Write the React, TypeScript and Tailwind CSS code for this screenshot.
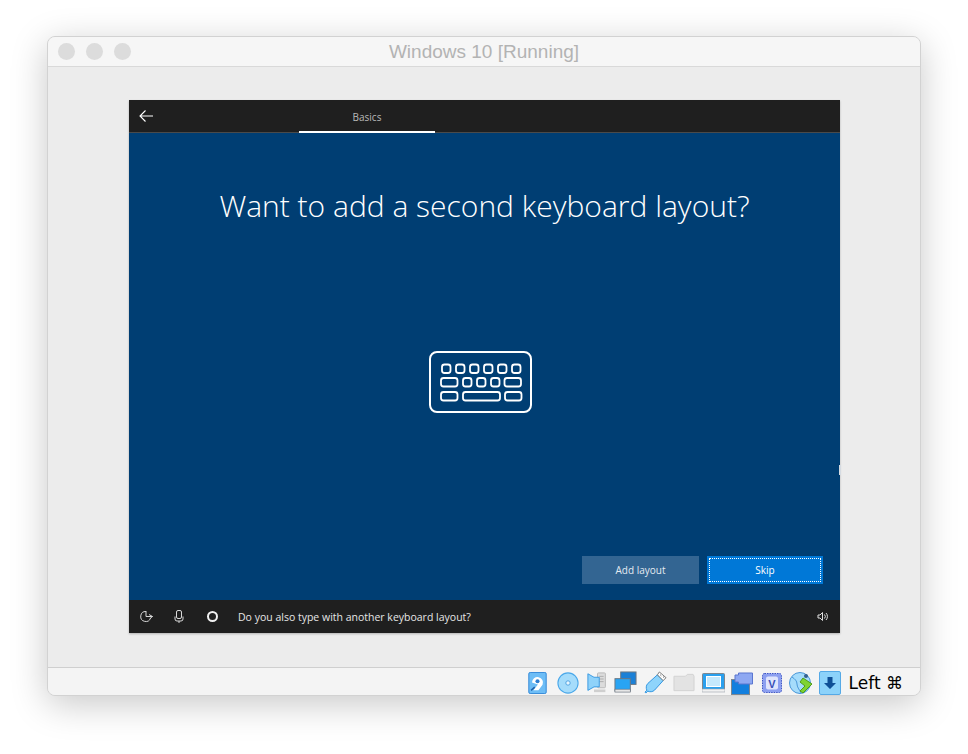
import React from 'react';

const sans = { fontFamily: '"Open Sans", sans-serif' };

function KeyboardIcon() {
  const row1 = [0, 1, 2, 3, 4, 5];
  return (
    <svg width="103" height="62" viewBox="0 0 103 62" fill="none" stroke="#ffffff" strokeWidth="1.8">
      <rect x="1" y="1" width="101" height="60" rx="7" strokeWidth="2" />
      {row1.map((i) => (
        <rect key={i} x={13 + i * 14} y="13.5" width="8.5" height="8.5" rx="2.5" />
      ))}
      <rect x="12" y="27" width="16.5" height="8.5" rx="2.5" />
      <rect x="34" y="27" width="8.5" height="8.5" rx="2.5" />
      <rect x="48" y="27" width="8.5" height="8.5" rx="2.5" />
      <rect x="62" y="27" width="8.5" height="8.5" rx="2.5" />
      <rect x="75.5" y="27" width="16.5" height="8.5" rx="2.5" />
      <rect x="12" y="41" width="16.5" height="8.5" rx="2.5" />
      <rect x="34" y="41" width="37" height="8.5" rx="2.5" />
      <rect x="76" y="41" width="16.5" height="8.5" rx="2.5" />
    </svg>
  );
}

function HardDisk() {
  return (
    <svg width="19" height="22" viewBox="0 0 20 24">
      <rect x="0.5" y="0.5" width="19" height="23" rx="1.5" fill="#6dbdf6" stroke="#2b83d6" />
      <path d="M4 11.5a6 6 0 1 1 11.5 2.4L11 20H5.5l5-6.5" fill="#fff" />
      <circle cx="10" cy="10" r="2.2" fill="#2c7dd0" />
      <path d="M3 20l4-3.5" stroke="#1c5fa8" strokeWidth="1.6" />
    </svg>
  );
}

function Disc() {
  return (
    <svg width="22" height="22" viewBox="0 0 24 24">
      <circle cx="12" cy="12" r="11" fill="#a5dcfb" stroke="#4aa8ea" strokeWidth="1.2" />
      <circle cx="12" cy="12" r="2.4" fill="#e8f6fe" stroke="#4a9fdf" />
    </svg>
  );
}

function Audio() {
  return (
    <svg width="21" height="23" viewBox="0 0 24 24">
      <rect x="12" y="1" width="9" height="17" rx="1" fill="#dcdcdc" stroke="#b5b5b5" />
      <path d="M14 5h5M14 8h5M14 11h5" stroke="#a8a8a8" />
      <rect x="8" y="20" width="13" height="3" fill="#cfcfcf" />
      <path d="M8 6h6v11H8L1 21V2z" fill="#8fd2fa" stroke="#2f93e0" />
    </svg>
  );
}

function Network() {
  return (
    <svg width="23" height="23" viewBox="0 0 24 24">
      <rect x="7" y="1" width="16" height="13" fill="#1b80d6" stroke="#6d7680" />
      <rect x="1" y="8" width="16" height="13" fill="#29a4f3" stroke="#6d7680" />
      <rect x="1" y="19" width="16" height="3" fill="#e6e6e6" stroke="#6d7680" strokeWidth="0.7" />
    </svg>
  );
}

function Usb() {
  return (
    <svg width="23" height="23" viewBox="0 0 24 24">
      <path d="M14 4l6 6-9 10c-2 2-5 2-7 1l-2 2-1-1 2-2c-1-2-1-5 1-7z" fill="#8ed4fb" stroke="#2f93e0" />
      <path d="M16 1l7 6-3 3-6-6z" fill="#fff" stroke="#777" />
      <path d="M17 4l1 1M20 6l1 1" stroke="#555" />
    </svg>
  );
}

function Folder() {
  return (
    <svg width="22" height="19" viewBox="0 0 23 19">
      <path d="M1 3h12l2-2h6l1 2v15H1z" fill="#e3e3e3" stroke="#d2d2d2" />
    </svg>
  );
}

function Display() {
  return (
    <svg width="23" height="20" viewBox="0 0 23 20">
      <rect x="0.5" y="0.5" width="22" height="17" rx="1" fill="#2aa0ee" stroke="#7d8790" />
      <rect x="4.5" y="3.5" width="14" height="10" fill="#c5e9fd" stroke="#fff" />
      <rect x="0" y="16" width="23" height="3" fill="#f1f1f1" stroke="#99a2aa" strokeWidth="0.6" />
    </svg>
  );
}

function Capture() {
  return (
    <svg width="23" height="24" viewBox="0 0 23 24">
      <rect x="0.5" y="8.5" width="18" height="15" fill="#127fde" stroke="#7d8790" />
      <path d="M4 4h3.5V2h14v11h-14v-2H4z" fill="#8ea8f2" stroke="#5b76d0" />
    </svg>
  );
}

function Chip() {
  return (
    <svg width="22" height="24" viewBox="0 0 22 24">
      <rect x="1.5" y="2.5" width="19" height="19" rx="2" fill="#8c9ff0" stroke="#3f56c5" strokeDasharray="1.5 1" />
      <rect x="5" y="5.5" width="12" height="13" rx="2" fill="#dfe5fc" />
      <text x="11" y="16.5" textAnchor="middle" fontSize="11" fontWeight="700" fill="#3a50b8" fontFamily="Liberation Sans">V</text>
    </svg>
  );
}

function SharedGlobe() {
  return (
    <svg width="23" height="24" viewBox="0 0 23 24">
      <circle cx="11" cy="12" r="10.5" fill="#a5dcfb" stroke="#4a97d8" />
      <path d="M3 6c3 2 5 4 5 7s2 5 4 9" stroke="#4a97d8" fill="none" />
      <circle cx="17" cy="5" r="2" fill="#35608f" />
      <path d="M14 7l9 6-9 9-3-2 5-5-5-4z" fill="#7fd332" stroke="#4f9b18" />
    </svg>
  );
}

function DownloadIcon() {
  return (
    <svg width="22" height="24" viewBox="0 0 22 24">
      <rect x="0.5" y="0.5" width="21" height="23" rx="1.5" fill="#8cd2fa" stroke="#55a9e6" />
      <path d="M8.5 6h5v6H17l-6 6-6-6h3.5z" fill="#0f4f96" />
    </svg>
  );
}

export default function App() {
  return (
    <div className="w-[968px] h-[754px] bg-white pt-[36px] pl-[47px] overflow-hidden" style={sans}>
      <div className="w-[874px] h-[660px] flex flex-col rounded-[8px] bg-[#ececec] border border-[#d2d2d2] shadow-[0_8px_36px_rgba(0,0,0,0.22)] overflow-hidden">
        {/* title bar */}
        <div className="relative h-[30px] shrink-0 flex items-center bg-[#f6f6f6] border-b border-[#d9d9d9]">
          <div className="flex gap-[11px] pl-[10px]">
            <div className="w-[17px] h-[17px] rounded-full bg-[#dcdcdc]" />
            <div className="w-[17px] h-[17px] rounded-full bg-[#dcdcdc]" />
            <div className="w-[17px] h-[17px] rounded-full bg-[#dcdcdc]" />
          </div>
          <div className="absolute inset-0 pt-[2px] flex items-center justify-center text-[19px] text-[#b3b3b3]" style={{ fontFamily: '"Liberation Sans", sans-serif' }}>
            Windows 10 [Running]
          </div>
        </div>

        {/* guest display */}
        <div className="h-[600px] shrink-0 pt-[33px] pl-[81px]">
          <div className="relative w-[711px] h-[533px] flex flex-col bg-[#003e73] shadow-[0_1px_2px_rgba(0,0,0,0.25)]">
            <div className="h-[33px] shrink-0 flex bg-[#1f1f1f] border-b border-[#4a4a4a]">
              <div className="w-[170px] flex items-center pl-[10px]">
                <svg width="14" height="12" viewBox="0 0 14 12" fill="none" stroke="#ffffff" strokeWidth="1.1">
                  <path d="M14 6H1M6.5 0.5L1 6l5.5 5.5" />
                </svg>
              </div>
              <div className="w-[136px] h-[33px] pt-[3px] flex items-center justify-center border-b-2 border-white text-[10px] text-[#b9b9b9]">
                Basics
              </div>
            </div>

            <div className="flex-1 flex flex-col items-center">
              <h1 className="mt-[50px] text-[30px] leading-[46px] font-light text-white">Want to add a second keyboard layout?</h1>
              <div className="mt-[122px] mr-[8px]">
                <KeyboardIcon />
              </div>
              <div className="mt-auto mb-[16px] self-end flex gap-[8px] pr-[17px]">
                <div className="w-[117px] h-[28px] flex items-center justify-center bg-[#336592] text-[10px] text-[#e4ebf1]">Add layout</div>
                <div className="w-[116px] h-[28px] p-[2px] bg-[#0078d7]">
                  <div className="w-full h-full flex items-center justify-center border border-dotted border-white text-[10px] text-white">Skip</div>
                </div>
              </div>
            </div>

            <div className="h-[33px] shrink-0 flex items-center bg-[#1f1f1f] pl-[11px] pr-[12px]">
              <svg width="13" height="13" viewBox="0 0 13 13" fill="none" stroke="#d8d8d8" strokeWidth="1">
                <path d="M6 1.5A5 5 0 1 0 10.5 8M6 1v5.5h6.5M9 4.5l3.5 2-2.5 2" />
              </svg>
              <svg className="ml-[21px]" width="10" height="13" viewBox="0 0 10 13" fill="none" stroke="#d8d8d8" strokeWidth="1">
                <rect x="2.5" y="0.5" width="5" height="8" rx="1.5" />
                <path d="M1 6.5v2.5a2 2 0 0 0 2 2h4a2 2 0 0 0 2-2V6.5M5 11v2" />
              </svg>
              <div className="ml-[23px] w-[11px] h-[11px] rounded-full border-2 border-[#f0f0f0]" />
              <div className="ml-[20px] pt-[2px] text-[10.5px] text-[#e6e6e6] flex-1">Do you also type with another keyboard layout?</div>
              <svg width="11" height="11" viewBox="0 0 11 11" fill="none" stroke="#e0e0e0" strokeWidth="1">
                <path d="M1 4h2l2.5-2.5v8L3 7H1zM7.5 3.5a3 3 0 0 1 0 4M9 2a5 5 0 0 1 0 7" />
              </svg>
            </div>

            {/* resize handle sliver on the display edge */}
            <div className="absolute right-[-1px] top-[365px] w-[2px] h-[10px] bg-[#d5dbe2]" />
          </div>
        </div>

        {/* status bar */}
        <div className="flex-1 flex items-center justify-end gap-[6.5px] pr-[17px] pt-[1px] bg-[#f4f4f4] border-t border-[#cfcfcf]">
          <div className="mr-[4px]"><HardDisk /></div>
          <div className="mr-[1px]"><Disc /></div>
          <Audio />
          <Network />
          <Usb />
          <Folder />
          <Display />
          <Capture />
          <Chip />
          <SharedGlobe />
          <DownloadIcon />
          <div className="ml-[1.5px] pt-[2px] text-[17px] text-black" style={{ fontFamily: '"DejaVu Sans", sans-serif' }}>Left ⌘</div>
        </div>
      </div>
    </div>
  );
}
